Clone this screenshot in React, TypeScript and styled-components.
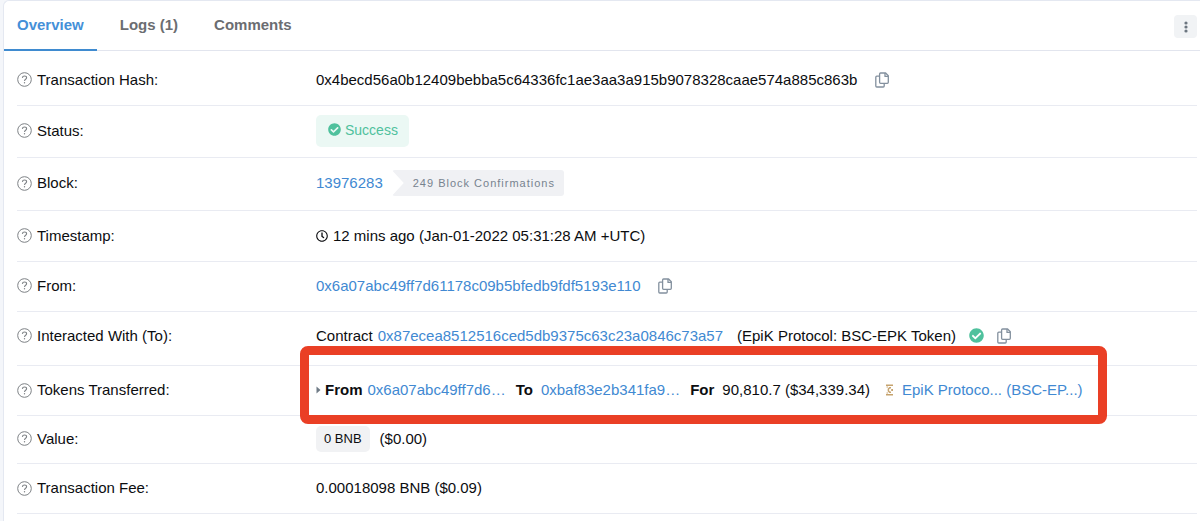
import React from "react";
import styled, { createGlobalStyle } from "styled-components";
import { FaCheckCircle, FaRegClock } from "react-icons/fa";

const GlobalStyle = createGlobalStyle`
  *, *::before, *::after { box-sizing: border-box; }
  body {
    margin: 0;
    background: #f4f6fa;
    color: #0c0d10;
    font-family: "Liberation Sans", Arial, sans-serif;
    font-size: 15px;
    line-height: 20px;
  }
`;

const Card = styled.main`
  min-height: 100vh;
  margin-left: 3px;
  background: #fff;
  border: 1px solid #e4e8f1;
  border-width: 1px 0 0 1px;
  border-radius: 6px 0 0 0;
`;

const Header = styled.header`
  display: flex;
  align-items: center;
  justify-content: space-between;
  padding-right: 3px;
  border-bottom: 1px solid #e2e5ee;
`;

const Tabs = styled.nav`
  display: flex;
  gap: 10px;
  margin-bottom: -1px;
`;

const Tab = styled.a<{ $active?: boolean }>`
  padding: 14px 13px;
  border-bottom: 2px solid ${(p) => (p.$active ? "#3f8bd0" : "transparent")};
  color: ${(p) => (p.$active ? "#4490d8" : "#6b6d71")};
  font-weight: 700;
  text-decoration: none;
`;

const MenuButton = styled.button`
  display: flex;
  align-items: center;
  justify-content: center;
  width: 23px;
  height: 23px;
  margin-top: 2px;
  padding: 0;
  border: 0;
  border-radius: 4px;
  background: #f1f3f5;
  color: #6c7680;
`;

const Details = styled.dl`
  margin: 0;
  padding: 4px 3px 0 13px;
`;

const Row = styled.div<{ $height: number; $after: number }>`
  display: grid;
  grid-template-columns: 299px minmax(0, 1fr);
  align-items: center;
  min-height: ${(p) => p.$height}px;
  padding-bottom: ${(p) => p.$after}px;
  border-bottom: 1px solid #e9ebf2;
`;

const Label = styled.dt`
  display: flex;
  align-items: center;
  gap: 5px;
`;

const Value = styled.dd`
  display: flex;
  align-items: center;
  margin: 0;
  white-space: nowrap;
`;

const Link = styled.a`
  color: #4189d2;
  text-decoration: none;
`;

const IconButton = styled.button<{ $gap: number }>`
  display: flex;
  margin: 0 0 0 ${(p) => p.$gap}px;
  padding: 0;
  border: 0;
  background: none;
  color: #83909e;
`;

const StatusBadge = styled.span`
  display: flex;
  gap: 4px;
  height: 32px;
  padding: 5px 11px 5px 12px;
  border-radius: 5px;
  background: #ebf8f4;
  color: #4fc19d;
  font-size: 14px;
  svg { margin-top: 3px; }
`;

const Confirmations = styled.span`
  margin-left: 9px;
  padding: 3px 9px 3px 21px;
  border-radius: 3px;
  background: #f0f1f4;
  clip-path: polygon(0 0, 100% 0, 100% 100%, 0 100%, 12px 50%);
  color: #77838f;
  font-size: 11px;
  letter-spacing: 1px;
`;

const Amount = styled.span`
  margin-right: 10px;
  padding: 3px 8px;
  border-radius: 5px;
  background: #f1f2f4;
  font-size: 13px;
`;

const Clock = styled(FaRegClock)`
  margin-right: 5px;
`;

const Verified = styled(FaCheckCircle)`
  margin-left: 13px;
  color: #4fc19d;
`;

const Contract = styled.span`
  display: flex;
  gap: 5px;
  margin-right: 14px;
`;

const Transfer = styled.div`
  position: relative;
  display: flex;
  align-items: center;
  &::after {
    content: "";
    position: absolute;
    inset: -34px -24px -24px -16px;
    border: 9px solid #ea3f25;
    border-radius: 8px;
    pointer-events: none;
  }
`;

const Party = styled.span<{ $gap: number }>`
  display: flex;
  gap: ${(p) => p.$gap}px;
  margin-right: 10px;
`;

const Token = styled.span`
  display: flex;
  align-items: center;
  gap: 8px;
  margin-left: 6px;
`;

const HelpIcon = () => (
  <svg width="15" height="15" viewBox="0 0 15 15" fill="none" stroke="#7d8185" aria-hidden="true">
    <circle cx="7.5" cy="7.5" r="6.8" strokeWidth="1" />
    <path d="M5.4 5.9C5.5 4.6 6.3 4 7.5 4s2.1.7 2.1 1.8c0 1.4-2 1.5-2 2.9v.3" strokeWidth="1.1" />
    <circle cx="7.5" cy="10.8" r=".7" fill="#7d8185" stroke="none" />
  </svg>
);

const CopyIcon = () => (
  <svg width="14" height="16" viewBox="0 0 14 16" fill="none" stroke="currentColor" strokeWidth="1.3" strokeLinejoin="round" aria-hidden="true">
    <path d="M5.6 1h5l2.7 2.7v6.6a1 1 0 0 1-1 1H5.6a1 1 0 0 1-1-1V2a1 1 0 0 1 1-1Z" />
    <path d="M10 1v3.4h3.3" />
    <path d="M4.6 4.2H1.8a1 1 0 0 0-1 1V14a1 1 0 0 0 1 1h6.4a1 1 0 0 0 1-1v-2.7" />
  </svg>
);

const DotsIcon = () => (
  <svg width="4" height="12" viewBox="0 0 4 12" fill="currentColor" aria-hidden="true">
    <circle cx="2" cy="2" r="1.6" />
    <circle cx="2" cy="6" r="1.6" />
    <circle cx="2" cy="10" r="1.6" />
  </svg>
);

const CaretIcon = styled.svg`
  margin-right: 4px;
  fill: #6f7b86;
`;

const TokenIcon = () => (
  <svg width="8" height="12" viewBox="0 0 8 12" fill="none" stroke="#c6a36e" aria-hidden="true">
    <path d="M0 1.2h7M0 10.8h7" strokeWidth="1.4" />
    <path d="M1.2 1v3M1.2 8v3" strokeWidth="1.2" opacity=".6" />
    <path d="M5 3.8H3.6L2.4 5v2l1.2 1.2H5" strokeWidth="1.5" />
    <path d="M5.2 6H7" strokeWidth="1.8" />
  </svg>
);

const CopyButton = ({ gap }: { gap: number }) => (
  <IconButton type="button" aria-label="Copy" $gap={gap}>
    <CopyIcon />
  </IconButton>
);

type FieldProps = { label: string; height: number; after?: number; children: React.ReactNode };

const Field = ({ label, height, after = 1, children }: FieldProps) => (
  <Row $height={height} $after={after}>
    <Label>
      <HelpIcon />
      {label}
    </Label>
    <Value>{children}</Value>
  </Row>
);

export default function App() {
  return (
    <>
      <GlobalStyle />
      <Card>
        <Header>
          <Tabs>
            <Tab href="#overview" $active>Overview</Tab>
            <Tab href="#logs">Logs (1)</Tab>
            <Tab href="#comments">Comments</Tab>
          </Tabs>
          <MenuButton type="button" aria-label="More options">
            <DotsIcon />
          </MenuButton>
        </Header>
        <Details>
          <Field label="Transaction Hash:" height={51}>
            0x4becd56a0b12409bebba5c64336fc1ae3aa3a915b9078328caae574a885c863b
            <CopyButton gap={18} />
          </Field>
          <Field label="Status:" height={52} after={2}>
            <StatusBadge>
              <FaCheckCircle size={13} />
              Success
            </StatusBadge>
          </Field>
          <Field label="Block:" height={53} after={2}>
            <Link href="#block">13976283</Link>
            <Confirmations>249 Block Confirmations</Confirmations>
          </Field>
          <Field label="Timestamp:" height={51}>
            <Clock size={12} />
            12 mins ago (Jan-01-2022 05:31:28 AM +UTC)
          </Field>
          <Field label="From:" height={50} after={2}>
            <Link href="#from">0x6a07abc49ff7d61178c09b5bfedb9fdf5193e110</Link>
            <CopyButton gap={18} />
          </Field>
          <Field label="Interacted With (To):" height={54} after={6}>
            <Contract>
              Contract
              <Link href="#contract">0x87ecea8512516ced5db9375c63c23a0846c73a57</Link>
            </Contract>
            (EpiK Protocol: BSC-EPK Token)
            <Verified size={15} />
            <CopyButton gap={13} />
          </Field>
          <Field label="Tokens Transferred:" height={50}>
            <Transfer>
              <CaretIcon width="5" height="8" viewBox="0 0 5 8" aria-hidden="true">
                <path d="M.5.5 4.5 4 .5 7.5Z" />
              </CaretIcon>
              <Party $gap={5}>
                <b>From</b>
                <Link href="#sender">0x6a07abc49ff7d6…</Link>
              </Party>
              <Party $gap={8}>
                <b>To</b>
                <Link href="#recipient">0xbaf83e2b341fa9…</Link>
              </Party>
              <Party $gap={8}>
                <b>For</b>
                90,810.7 ($34,339.34)
              </Party>
              <Token>
                <TokenIcon />
                <Link href="#token">EpiK Protoco... (BSC-EP...)</Link>
              </Token>
            </Transfer>
          </Field>
          <Field label="Value:" height={48} after={2}>
            <Amount>0 BNB</Amount>
            ($0.00)
          </Field>
          <Field label="Transaction Fee:" height={50}>
            0.00018098 BNB ($0.09)
          </Field>
        </Details>
      </Card>
    </>
  );
}
